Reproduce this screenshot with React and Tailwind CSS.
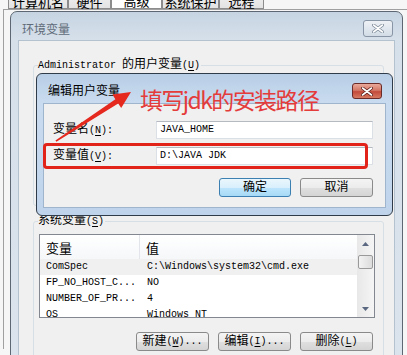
const FONT = "font-['Liberation_Mono','Noto_Sans_CJK_SC',monospace]";
const CJK = "font-['Noto_Sans_CJK_SC','Liberation_Sans',sans-serif]";

// latin runs in the UI font are narrower than the CJK glyphs
function Lat({ children }) {
  return <span className="text-[10px]">{children}</span>;
}

function Key({ k }) {
  return (
    <Lat>
      (<u className="underline-offset-2">{k}</u>)
    </Lat>
  );
}

const TABS = [
  { label: "计算机名", w: "w-[60px]" },
  { label: "硬件", w: "w-[43px]" },
  { label: "高级", w: "w-[51px]", active: true },
  { label: "系统保护", w: "w-[57px]" },
  { label: "远程", w: "w-[45px]" },
];

const ROWS = [
  { name: "ComSpec", value: "C:\\Windows\\system32\\cmd.exe", selected: true },
  { name: "FP_NO_HOST_C...", value: "NO" },
  { name: "NUMBER_OF_PR...", value: "4" },
  { name: "OS", value: "Windows_NT" },
];

function CloseGlyph({ outline }) {
  return (
    <svg width="12" height="9" viewBox="0 0 12 9">
      <path d="M1.5 1 L10.5 8 M10.5 1 L1.5 8" stroke={outline} strokeWidth="3.2" strokeLinecap="round" />
      <path d="M1.5 1 L10.5 8 M10.5 1 L1.5 8" stroke="#ffffff" strokeWidth="1.6" strokeLinecap="round" />
    </svg>
  );
}

function Button({ children, primary, w = "w-[73px]" }) {
  return (
    <div
      className={`flex h-[19px] ${w} items-center justify-center rounded-[3px] border ${
        primary
          ? "border-[#3c7fb1] bg-[linear-gradient(180deg,#eaf6fd_0%,#d9f0fc_50%,#bee6fd_50%,#a7d9f5_100%)]"
          : "border-[#8a8a8a] bg-[linear-gradient(180deg,#f4f4f4_0%,#ececec_50%,#e0e0e0_50%,#d4d4d4_100%)]"
      }`}
    >
      {children}
    </div>
  );
}

function Input({ value }) {
  return (
    <div className="flex h-[18px] w-[217px] items-center border border-[#dbe0e6] border-t-[#b5b9c0] bg-white pl-[3px] text-[10px]">
      {value}
    </div>
  );
}

function Arrow({ dir }) {
  return (
    <svg width="7" height="4" viewBox="0 0 7 4">
      <path d={dir === "up" ? "M0 4 L3.5 0 L7 4 Z" : "M0 0 L3.5 4 L7 0 Z"} fill="#5a6780" />
    </svg>
  );
}

export default function App() {
  return (
    <div className={`relative h-[355px] w-[407px] overflow-hidden bg-[#f6f6f6] text-[12px] leading-none text-black ${FONT}`}>
      {/* property sheet tabs, mostly scrolled off the top */}
      <div className="-mt-[10px] flex h-[19px] items-stretch pl-[8px]">
        {TABS.map((t) => (
          <div
            key={t.label}
            className={`flex ${t.w} items-center justify-center border border-[#8c8c8c] pt-[4px] ${
              t.active ? "-mt-[2px] bg-white" : "bg-[linear-gradient(180deg,#f2f2f2,#e3e3e3)]"
            } ${CJK} text-[13px]`}
          >
            {t.label}
          </div>
        ))}
      </div>
      <div className="ml-[3px] h-[340px] border-l border-t border-[#a0a0a0]" />

      {/* 环境变量 window */}
      <div className="absolute left-[10px] top-[11px] flex h-[360px] w-[393px] flex-col rounded-t-[7px] border border-[#5c6773] bg-[linear-gradient(180deg,#c6d4e2_0px,#d6e0ea_28px,#dbe4ed_100%)] px-[7px]">
        <div className="flex h-[28px] shrink-0 items-center justify-between pl-[4px] pr-[2px] pt-[5px]">
          <span className={`${CJK} text-[12px] text-[#5f6b78]`}>环境变量</span>
          <div className="flex h-[17px] w-[30px] items-center justify-center rounded-[3px] border border-[#8795a6] bg-[linear-gradient(180deg,#eef2f6,#d3dce6)]">
            <CloseGlyph outline="#7d8a99" />
          </div>
        </div>
        <div className="flex-1 border border-[#b4c2d0] bg-[#f0f0f0]">
          <div className="relative ml-[14px] mt-[24px] h-[141px] w-[351px] rounded-[3px] border border-[#d5dfe5]">
            <div className="absolute -top-[7px] left-[4px] bg-[#f0f0f0] pr-[1px] leading-[12px]">
              <Lat>Administrator </Lat>的用户变量<Key k="U" />
            </div>
          </div>

          <div className="relative ml-[14px] mt-[15px] h-[160px] w-[351px] rounded-[3px] border border-[#d5dfe5]">
            <div className="absolute -top-[7px] left-[4px] bg-[#f0f0f0] pr-[1px] leading-[12px]">
              系统变量<Key k="S" />
            </div>

            <div className="ml-[5px] mt-[12px] flex h-[84px] w-[336px] border border-[#828790] bg-white">
              <div className="flex min-w-0 flex-1 flex-col overflow-hidden">
                <div className={`flex h-[24px] shrink-0 items-center bg-[linear-gradient(180deg,#ffffff,#f5f7f9)] ${CJK} text-[13px]`}>
                  <div className="flex h-full w-[100px] items-center border-r border-[#e2e5e9] pl-[6px]">变量</div>
                  <div className="pl-[6px]">值</div>
                </div>
                {ROWS.map((r) => (
                  <div
                    key={r.name}
                    className={`flex h-[16px] shrink-0 items-center text-[10px] ${r.selected ? "bg-[#f0f0f0]" : ""}`}
                  >
                    <div className="w-[101px] pl-[6px]">{r.name}</div>
                    <div className="pl-[6px]">{r.value}</div>
                  </div>
                ))}
              </div>
              <div className="flex w-[17px] flex-col items-center bg-[linear-gradient(90deg,#e8e8e8,#f5f5f5)]">
                <div className="flex h-[17px] items-center justify-center">
                  <Arrow dir="up" />
                </div>
                <div className="mt-[3px] h-[14px] w-[15px] rounded-[2px] border border-[#9a9a9a] bg-[linear-gradient(90deg,#f3f3f3,#dcdcdc)]" />
                <div className="flex-1" />
                <div className="flex h-[17px] items-center justify-center">
                  <Arrow dir="down" />
                </div>
              </div>
            </div>

            <div className="mt-[14px] flex justify-end gap-[9px] pr-[10px]">
              <Button>
                新建<Key k="W" />
                <Lat>...</Lat>
              </Button>
              <Button>
                编辑<Key k="I" />
                <Lat>...</Lat>
              </Button>
              <Button>
                删除<Key k="L" />
              </Button>
            </div>
          </div>
        </div>
      </div>

      {/* 编辑用户变量 dialog */}
      <div className="absolute left-[36px] top-[73px] flex h-[143px] w-[357px] flex-col rounded-[6px] border border-[#2f3b48] bg-[linear-gradient(180deg,#b8cee6_0px,#c9dbef_29px,#bfd4eb_100%)] px-[6px] pb-[7px]">
        <div className="flex h-[29px] shrink-0 items-start justify-between pl-[5px] pr-[4px]">
          <span className={`pt-[10px] ${CJK} text-[12px]`}>编辑用户变量</span>
          <div className="mt-[9px] flex h-[16px] w-[30px] items-center justify-center rounded-[3px] border border-[#6b2b28] bg-[linear-gradient(180deg,#e9a99a_0%,#d47867_45%,#c34a3a_55%,#d67a62_100%)]">
            <CloseGlyph outline="#5b1f1a" />
          </div>
        </div>
        <div className="flex-1 border border-[#9fb5cd] bg-[#f0f0f0] pl-[9px] pr-[12px]">
          <div className="mt-[17px] flex items-center">
            <div className="w-[103px]">
              变量名<Key k="N" />
              <Lat>:</Lat>
            </div>
            <Input value="JAVA_HOME" />
          </div>
          <div className="mt-[8px] flex items-center">
            <div className="w-[103px]">
              变量值<Key k="V" />
              <Lat>:</Lat>
            </div>
            <Input value="D:\JAVA JDK" />
          </div>
          <div className="mt-[13px] flex justify-end gap-[9px]">
            <Button primary w="w-[72px]">确定</Button>
            <Button>取消</Button>
          </div>
        </div>
      </div>

      {/* red annotation */}
      <div className="absolute left-[43px] top-[143px] h-[26px] w-[325px] rounded-[4px] border-[3px] border-[#e2231a]" />
      <svg className="absolute left-0 top-0" width="407" height="355" viewBox="0 0 407 355">
        <polygon
          points="131,92 121.2,108 118.2,103.4 56.4,141.8 55.4,140.4 115.4,99.2 112.4,94.6"
          fill="#e5291f"
        />
      </svg>
      <div className={`absolute left-[140px] top-[88px] text-[23px] tracking-[-1.6px] text-[#e43b3b] ${CJK}`}>
        填写jdk的安装路径
      </div>
    </div>
  );
}
